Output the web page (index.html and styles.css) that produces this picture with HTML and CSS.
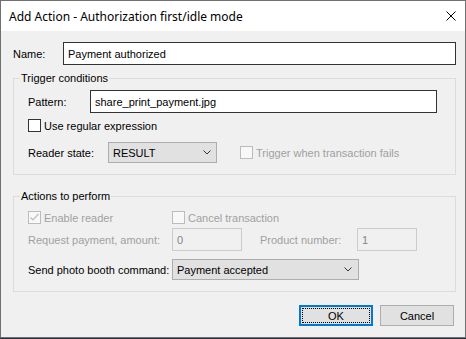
FILE: index.html
```html
<!DOCTYPE html>
<html>
<head>
  <meta charset="UTF-8">
  <title>Add Action - Authorization first/idle mode</title>
  <link rel="stylesheet" href="styles.css">
</head>
<body>
  <div class="window">
    <div class="titlebar">
      <span class="title">Add Action - Authorization first/idle mode</span>
      <span class="close">
        <svg width="10" height="10" viewBox="0 0 10 10"><path d="M0.5 0.5L9.5 9.5M9.5 0.5L0.5 9.5" stroke="#000" stroke-width="1" fill="none"/></svg>
      </span>
    </div>

    <div class="content">
      <div class="row name-row">
        <span class="label name-label">Name:</span>
        <div class="edit name-edit">Payment authorized</div>
      </div>

      <!-- Trigger conditions -->
      <div class="group trigger-group">
        <div class="group-title">Trigger conditions</div>
        <div class="row pattern-row">
          <span class="label pattern-label">Pattern:</span>
          <div class="edit pattern-edit">share_print_payment.jpg</div>
        </div>
        <div class="row check-row regex-row">
          <span class="check"></span>
          <span class="check-text">Use regular expression</span>
        </div>
        <div class="row combo-row reader-row">
          <span class="label reader-label">Reader state:</span>
          <div class="combo reader-combo">
            <span>RESULT</span>
            <svg width="8" height="5" viewBox="0 0 8 5"><path d="M0.5 0.5L4 4L7.5 0.5" stroke="#333" fill="none"/></svg>
          </div>
          <span class="check disabled fail-check"></span>
          <span class="check-text disabled-text">Trigger when transaction fails</span>
        </div>
      </div>

      <!-- Actions to perform -->
      <div class="group actions-group">
        <div class="group-title">Actions to perform</div>
        <div class="row check-row">
          <span class="check disabled">
            <svg width="11" height="11" viewBox="0 0 11 11"><path d="M1.5 5.5L4 8L9.5 2" stroke="#bcbcbc" stroke-width="1.2" fill="none"/></svg>
          </span>
          <span class="check-text disabled-text enable-text">Enable reader</span>
          <span class="check disabled"></span>
          <span class="check-text disabled-text">Cancel transaction</span>
        </div>
        <div class="row edit-row">
          <span class="label wide-label disabled-text">Request payment, amount:</span>
          <div class="edit disabled-edit amount-edit">0</div>
          <span class="label product-label disabled-text">Product number:</span>
          <div class="edit disabled-edit product-edit">1</div>
        </div>
        <div class="row combo-row command-row">
          <span class="label wide-label">Send photo booth command:</span>
          <div class="combo command-combo">
            <span>Payment accepted</span>
            <svg width="8" height="5" viewBox="0 0 8 5"><path d="M0.5 0.5L4 4L7.5 0.5" stroke="#333" fill="none"/></svg>
          </div>
        </div>
      </div>

      <div class="buttons">
        <button class="btn btn-default"><span class="focus">OK</span></button>
        <button class="btn">Cancel</button>
      </div>
    </div>
  </div>
</body>
</html>
```

FILE: styles.css
```css
/* Windows style dialog */
body {
  margin: 0;
  background-color: #2e2e3c;
  font-family: "Liberation Sans", Arial, sans-serif;
  font-size: 11px;
  color: #000;
}

.window {
  width: 466px;
  height: 338px;
  box-sizing: border-box;
  border: 1px solid #707070;
  background-color: #f0f0f0;
  display: flex;
  flex-direction: column;
}

.titlebar {
  height: 30px;
  flex: none;
  background-color: #fff;
  display: flex;
  align-items: center;
  justify-content: space-between;
  padding: 0 9px 0 8px;
}

.title {
  font-family: "Noto Sans", "Open Sans", sans-serif;
  font-size: 12px;
}

.close {
  display: flex;
  width: 10px;
  height: 10px;
}

.content {
  flex: 1;
  padding: 11px 9px 0 12px;
}

.row {
  display: flex;
  align-items: center;
}

.label {
  flex: none;
}

.name-label {
  width: 50px;
}

.edit {
  height: 23px;
  box-sizing: border-box;
  border: 1px solid #333;
  background-color: #fff;
  padding: 0 4px;
  display: flex;
  align-items: center;
}

.name-edit {
  width: 393px;
}

/* Group boxes */
.group {
  border: 1px solid #dcdcdc;
  padding: 0 18px 11px 14px;
}

.trigger-group {
  margin-top: 13px;
}

.actions-group {
  margin-top: 21px;
}

.group-title {
  display: table;
  margin: -8px 0 0 -8px;
  padding: 0 1px;
  line-height: 15px;
  background-color: #f0f0f0;
}

.pattern-row {
  margin-top: 4px;
  height: 23px;
}

.pattern-label {
  width: 62px;
}

.pattern-edit {
  width: 347px;
}

.check-row {
  height: 15px;
}

.regex-row {
  margin-top: 5px;
}

.check {
  width: 13px;
  height: 13px;
  box-sizing: border-box;
  border: 1px solid #333;
  background-color: #fff;
  flex: none;
  display: flex;
  align-items: center;
  justify-content: center;
}

.check.disabled {
  border-color: #bcbcbc;
  background-color: #f8f8f8;
}

.check-text {
  margin-left: 3px;
}

.disabled-text {
  color: #a0a0a0;
}

.enable-text {
  width: 128px;
}

.combo-row {
  height: 21px;
}

.reader-row {
  margin-top: 9px;
}

.reader-label {
  width: 80px;
}

.combo {
  height: 21px;
  box-sizing: border-box;
  border: 1px solid #adadad;
  background-color: #e1e1e1;
  display: flex;
  align-items: center;
  justify-content: space-between;
  padding: 0 5px 0 4px;
}

.reader-combo {
  width: 109px;
}

.fail-check {
  margin-left: 23px;
}

.actions-group .check-row {
  margin-top: 6px;
}

.edit-row {
  margin-top: 3px;
  height: 23px;
}

.wide-label {
  width: 144px;
}

.disabled-edit {
  border-color: #cccccc;
  background-color: #f0f0f0;
  color: #838383;
}

.amount-edit {
  width: 70px;
}

.product-label {
  margin-left: 18px;
  width: 97px;
}

.product-edit {
  width: 60px;
}

.command-row {
  margin-top: 8px;
}

.command-combo {
  width: 187px;
  padding-right: 6px;
}

/* Dialog buttons */
.buttons {
  display: flex;
  justify-content: flex-end;
  gap: 7px;
  margin-top: 13px;
  padding-right: 2px;
}

.btn {
  width: 74px;
  height: 21px;
  box-sizing: border-box;
  border: 1px solid #adadad;
  background-color: #e1e1e1;
  font-family: "Liberation Sans", Arial, sans-serif;
  font-size: 11px;
  color: #000;
  padding: 0;
}

.btn-default {
  border: 2px solid #0078d7;
  padding: 1px;
  display: flex;
}

.focus {
  flex: 1;
  border: 1px dotted #000;
  display: flex;
  align-items: center;
  justify-content: center;
}
```
